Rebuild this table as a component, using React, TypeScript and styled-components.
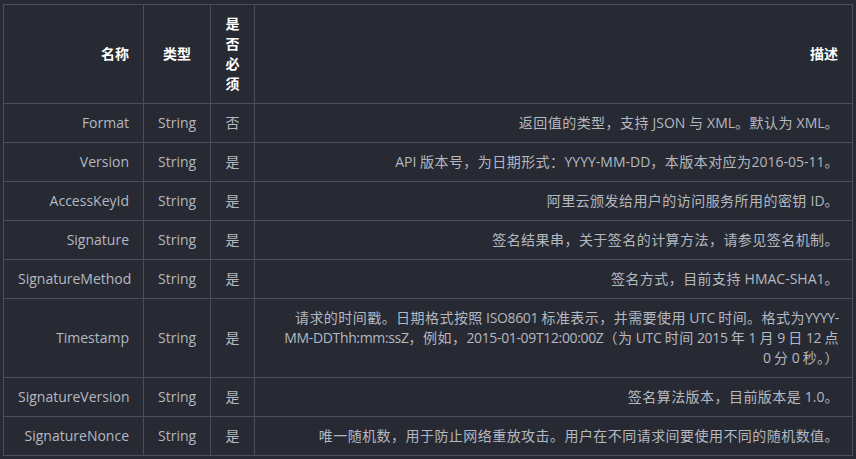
import { Fragment } from "react";
import styled, { createGlobalStyle } from "styled-components";

const GlobalStyle = createGlobalStyle`
  html, body {
    margin: 0;
    padding: 0;
    background: #272a33;
  }

  body {
    font-family: "Open Sans", "Noto Sans CJK SC", sans-serif;
  }
`;

type Align = "left" | "center" | "right";

const Page = styled.div`
  padding: 4px 3px;
`;

const Table = styled.table`
  width: 850px;
  border-collapse: collapse;
  table-layout: fixed;

  font-size: 14px;
  line-height: 20px;
  color: #b4b8c0;
`;

const Column = styled.col<{ $width?: number }>`
  width: ${({ $width }) => ($width ? `${$width}px` : "auto")};
`;

const HeadCell = styled.th<{ $align?: Align }>`
  padding: 9px 14px;
  border: 1px solid #4a4e5b;
  vertical-align: middle;

  color: #fff;
  font-weight: 700;
  text-align: ${({ $align }) => $align ?? "right"};
`;

const Cell = styled.td<{ $align?: Align }>`
  padding: 9px 14px;
  border: 1px solid #4a4e5b;
  vertical-align: middle;

  text-align: ${({ $align }) => $align ?? "right"};
`;

const DescCell = styled(Cell)<{ $tight?: boolean }>`
  padding: 9px 13px;
  letter-spacing: ${({ $tight }) => ($tight ? "-0.35px" : "normal")};
`;

// CJK glyphs in the original render a touch wider than Noto CJK
const Han = styled.span`
  letter-spacing: 0.45px;
`;

type Param = {
  name: string;
  type: string;
  required: string;
  desc: string[];
  tight?: boolean;
};

const params: Param[] = [
  { name: "Format", type: "String", required: "否", desc: ["返回值的类型，支持 JSON 与 XML。默认为 XML。"] },
  { name: "Version", type: "String", required: "是", desc: ["API 版本号，为日期形式：YYYY-MM-DD，本版本对应为2016-05-11。"] },
  { name: "AccessKeyId", type: "String", required: "是", desc: ["阿里云颁发给用户的访问服务所用的密钥 ID。"] },
  { name: "Signature", type: "String", required: "是", desc: ["签名结果串，关于签名的计算方法，请参见签名机制。"] },
  { name: "SignatureMethod", type: "String", required: "是", desc: ["签名方式，目前支持 HMAC-SHA1。"] },
  {
    name: "Timestamp",
    type: "String",
    required: "是",
    tight: true,
    desc: [
      "请求的时间戳。日期格式按照 ISO8601 标准表示，并需要使用 UTC 时间。格式为YYYY-",
      "MM-DDThh:mm:ssZ，例如，2015-01-09T12:00:00Z（为 UTC 时间 2015 年 1 月 9 日 12 点",
      "0 分 0 秒。）",
    ],
  },
  { name: "SignatureVersion", type: "String", required: "是", desc: ["签名算法版本，目前版本是 1.0。"] },
  { name: "SignatureNonce", type: "String", required: "是", desc: ["唯一随机数，用于防止网络重放攻击。用户在不同请求间要使用不同的随机数值。"] },
];

const HAN_RUN = /([\u3000-\u303f\u4e00-\u9fff\uff00-\uffef]+)/;

function renderLine(text: string) {
  return text.split(HAN_RUN).map((part, i) =>
    i % 2 === 1 ? <Han key={i}>{part}</Han> : part,
  );
}

function renderDesc(lines: string[]) {
  return lines.map((line, i) => (
    <Fragment key={i}>
      {i > 0 && <br />}
      {renderLine(line)}
    </Fragment>
  ));
}

function App() {
  return (
    <Page>
      <GlobalStyle />
      <Table>
        <colgroup>
          <Column $width={140} />
          <Column $width={67} />
          <Column $width={44} />
          <Column />
        </colgroup>
        <thead>
          <tr>
            <HeadCell>名称</HeadCell>
            <HeadCell $align="center">类型</HeadCell>
            <HeadCell $align="center">是否必须</HeadCell>
            <HeadCell>描述</HeadCell>
          </tr>
        </thead>
        <tbody>
          {params.map((p) => (
            <tr key={p.name}>
              <Cell>{p.name}</Cell>
              <Cell $align="center">{p.type}</Cell>
              <Cell $align="center">{p.required}</Cell>
              <DescCell $tight={p.tight}>{renderDesc(p.desc)}</DescCell>
            </tr>
          ))}
        </tbody>
      </Table>
    </Page>
  );
}

export default App;
